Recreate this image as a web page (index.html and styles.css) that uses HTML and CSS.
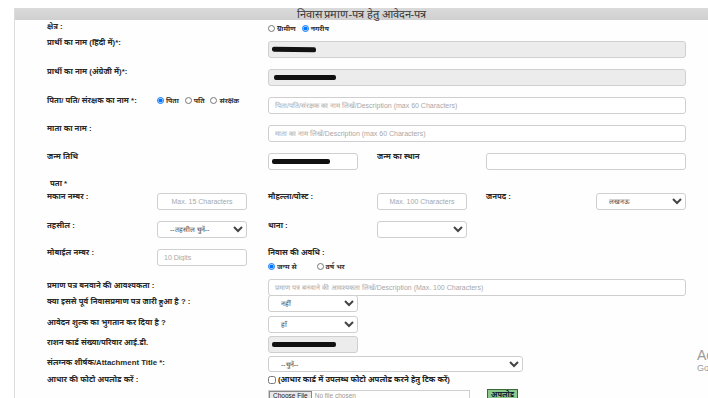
FILE: index.html
```html
<!DOCTYPE html>
<html lang="hi">
<head>
<meta charset="utf-8">
<title>निवास प्रमाण-पत्र</title>
<link rel="stylesheet" href="styles.css">
</head>
<body>
<div class="panel">
  <div class="head">निवास प्रमाण-पत्र हेतु आवेदन-पत्र</div>
  <div class="form">
    <div class="row h16">
      <div class="lbl">क्षेत्र :</div>
      <div class="c3 radios top4"><label><input type="radio" name="k"> ग्रामीण</label><label><input type="radio" name="k" checked> नगरीय</label></div>
    </div>
    <div class="row h29">
      <div class="lbl span2">प्रार्थी का नाम (हिंदी में)*:</div>
      <div class="c3 to7 mt3"><div class="box dis"><span class="red r1"></span></div></div>
    </div>
    <div class="row h29">
      <div class="lbl span2">प्रार्थी का नाम (अंग्रेजी में)*:</div>
      <div class="c3 to7 mt2"><div class="box dis"><span class="red r2"></span></div></div>
    </div>
    <div class="row h28">
      <div class="lbl">पिता/ पति/ संरक्षक का नाम *:</div>
      <div class="c2 radios"><label><input type="radio" name="p" checked>पिता</label><label><input type="radio" name="p">पति</label><label><input type="radio" name="p">संरक्षक</label></div>
      <div class="c3 to7 mt1"><input class="box" placeholder="पिता/पति/संरक्षक का नाम लिखें/Description (max 60 Characters)"></div>
    </div>
    <div class="row h28">
      <div class="lbl">माता का नाम :</div>
      <div class="c3 to7 mt1"><input class="box" placeholder="माता का नाम लिखें/Description (max 60 Characters)"></div>
    </div>
    <div class="row h27">
      <div class="lbl">जन्म तिथि</div>
      <div class="c3 mt1"><div class="box short"><span class="red r3"></span></div></div>
      <div class="c4 lbl">जन्म का स्थान</div>
      <div class="c5 to7 mt1"><input class="box"></div>
    </div>
    <div class="row h13">
      <div class="lbl pata">पता *</div>
    </div>
    <div class="row h29">
      <div class="lbl">मकान नम्बर :</div>
      <div class="c2 mt1"><input class="box short cen" placeholder="Max. 15 Characters"></div>
      <div class="c3 lbl">मौहल्ला/पोस्ट :</div>
      <div class="c4 mt1"><input class="box short cen" placeholder="Max. 100 Characters"></div>
      <div class="c5 lbl">जनपद :</div>
      <div class="c6 mt1"><select class="box short sel"><option>लखनऊ</option></select></div>
    </div>
    <div class="row h27">
      <div class="lbl">तहसील :</div>
      <div class="c2"><select class="box short sel"><option>--तहसील चुनें--</option></select></div>
      <div class="c3 lbl">थाना :</div>
      <div class="c4"><select class="box short sel"><option></option></select></div>
    </div>
    <div class="row h31">
      <div class="lbl">मोबाईल नम्बर :</div>
      <div class="c2 mt1"><input class="box short" placeholder="10 Digits"></div>
      <div class="c3 stack">
        <div class="lbl">निवास की अवधि :</div>
        <div class="radios wide"><label><input type="radio" name="n" checked>जन्म से</label><label><input type="radio" name="n">वर्ष भर</label></div>
      </div>
    </div>
    <div class="row h16 tight">
      <div class="lbl span2">प्रमाण पत्र बनवाने की आवश्यकता :</div>
      <div class="c3 to7"><input class="box" placeholder="प्रमाण पत्र बनवाने की आवश्यकता लिखें/Description (Max. 100 Characters)"></div>
    </div>
    <div class="row h21 tight">
      <div class="lbl span2">क्या इससे पूर्व निवासप्रमाण पत्र जारी हुआ है ? :</div>
      <div class="c3"><select class="box short sel"><option>नहीं</option></select></div>
    </div>
    <div class="row h20 tight">
      <div class="lbl span2">आवेदन शुल्क का भुगतान कर दिया है ?</div>
      <div class="c3"><select class="box short sel"><option>हाँ</option></select></div>
    </div>
    <div class="row h20 tight">
      <div class="lbl span2">राशन कार्ड संख्या/परिवार आई.डी.</div>
      <div class="c3"><div class="box short dis"><span class="red r4"></span></div></div>
    </div>
    <div class="row h19 tight">
      <div class="lbl span2">संलग्नक शीर्षक/Attachment Title *:</div>
      <div class="c3 to5"><select class="box attach sel"><option>--चुनें--</option></select></div>
    </div>
    <div class="row h13">
      <div class="lbl span2">आधार की फोटो अपलोड करें :</div>
      <div class="c3 to7 chk"><input type="checkbox"> (आधार कार्ड में उपलब्ध फोटो अपलोड करने हेतु टिक करें)</div>
    </div>
    <div class="row h20">
      <div class="c3 to5 file"><span class="fbtn">Choose File</span><span class="fname">No file chosen</span></div>
      <div class="c5 upwrap"><span class="upload">अपलोड</span></div>
    </div>
  </div>
</div>
<div class="wm"><div class="wm1">Activate Windows</div><div class="wm2">Go to Settings to activate Windows.</div></div>
</body>
</html>
```
FILE: styles.css
```css
html, body { margin: 0; padding: 0; }
body {
  width: 708px; height: 398px; overflow: hidden; background: #fff;
  font-family: "Liberation Sans", "Noto Sans", sans-serif;
  color: #222; position: relative;
}
.panel {
  margin: 8px 0 0 14px;
  border-left: 1px solid #dcdcdc;
  height: 400px;
  background: #fefefe;
}
.head {
  height: 12px;
  background: linear-gradient(#dadada, #d0d0d0);
  text-align: center;
  font-size: 11px;
  line-height: 12px;
  color: #333;
  font-family: "Liberation Serif", serif;
}
.form { padding: 2px 0 0 32px; }
.row {
  display: grid;
  grid-template-columns: 110px 111px 109px 109px 110px 90px;
  align-items: start;
}
.h13 { height: 13px; } .h14 { height: 14px; } .h16 { height: 16px; }
.h19 { height: 19px; } .h20 { height: 20px; } .h21 { height: 21px; }
.h27 { height: 27px; } .h28 { height: 28px; } .h29 { height: 29px; }
.h31 { height: 31px; }
.lbl {
  font-size: 7.8px; line-height: 10px; color: #2a2a2a; font-weight: bold;
  white-space: nowrap;
}
.span2 { grid-column: 1 / 3; }
.c2 { grid-column: 2; } .c3 { grid-column: 3; } .c4 { grid-column: 4; }
.c5 { grid-column: 5; } .c6 { grid-column: 6; }
.c3.to5 { grid-column: 3 / 5; }
.c5.to7 { grid-column: 5 / 7; }
.c3.to7 { grid-column: 3 / 7; }
.mt1 { margin-top: 1px; } .mt2 { margin-top: 2px; } .mt3 { margin-top: 3px; }
.top4 { margin-top: 2px; }
.tight .lbl { padding-top: 2px; }
.pata { padding-left: 3px; }
.box {
  display: block; box-sizing: border-box; width: 100%; height: 17px;
  border: 1px solid #cfcfcf; border-radius: 3px; background: #fff;
  font-family: "Liberation Sans", sans-serif; font-size: 7px; color: #333;
  padding: 0 6px; margin: 0; position: relative; outline: none;
}
.box::placeholder { color: #a8a8a8; }
.cen { text-align: center; }
.dis { background: #ececec; }
.short { width: 90px; }
.attach { width: 255px; height: 16px; }
.sel { padding: 0 4px 0 8px; color: #444; }
.red { position: absolute; background: #111; height: 5px; top: 5px; border-radius: 2px; }
.r1 { left: 3px; width: 44px; transform: rotate(1deg); }
.r2 { left: 5px; width: 62px; }
.r3 { left: 3px; width: 58px; }
.r4 { left: 3px; width: 64px; }
.radios { display: flex; gap: 6px; font-size: 7px; line-height: 9px; font-weight: bold; color: #333; }
.radios label { display: flex; align-items: center; gap: 2px; white-space: nowrap; }
.radios input { width: 7px; height: 7px; margin: 0; }
.radios.wide { gap: 20px; margin-top: 4px; }
.stack { display: flex; flex-direction: column; }
.chk { display: flex; align-items: center; gap: 2px; font-size: 7.8px; font-weight: bold; color: #222; white-space: nowrap; line-height: 10px; }
.chk input { width: 8px; height: 8px; margin: 0; }
.file {
  box-sizing: border-box; width: 202px; height: 11px; border: 1px solid #cfcfcf;
  display: flex; align-items: center; gap: 3px; font-size: 6.5px; margin-top: 2px;
}
.fbtn { border: 1px solid #888; background: #e9e9e9; padding: 0 3px; line-height: 8px; color: #222; }
.fname { color: #999; }
.upwrap { display: flex; }
.upload {
  display: block; margin-left: 1px; margin-top: 1px; font-size: 7.5px; font-weight: bold;
  background: #8cc98c; border: 1px solid #3a6a3a; padding: 0 3px; line-height: 10px; color: #123;
}
.wm { position: absolute; left: 697px; top: 347px; color: #9a9a9a; white-space: nowrap; }
.wm1 { font-size: 14px; line-height: 16px; }
.wm2 { font-size: 9px; line-height: 11px; }
```
